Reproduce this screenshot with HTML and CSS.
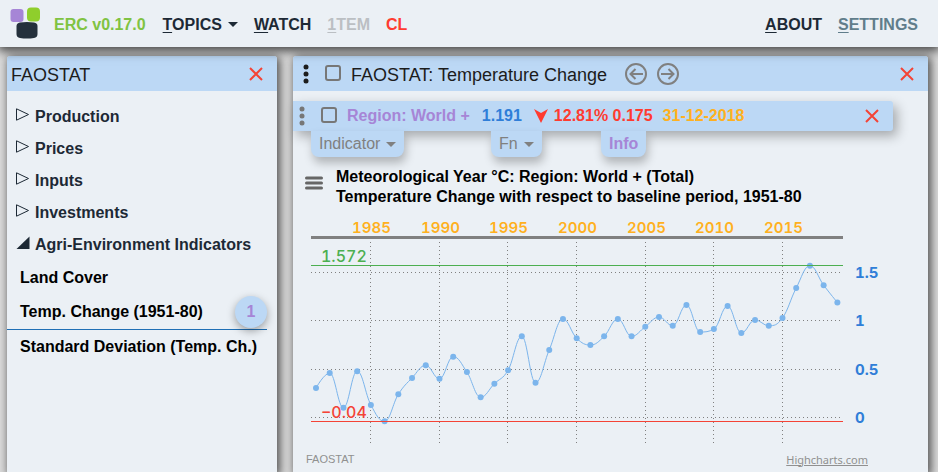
FILE: index.html
```html
<!DOCTYPE html>
<html lang="en">
<head>
    <meta charset="UTF-8">
    <meta name="viewport" content="width=device-width, initial-scale=1.0">
    <title>ERC v0.17.0</title>
    <link rel="stylesheet" href="styles.css">
</head>
<body>
    <header class="topbar">
        <svg class="logo" width="32" height="34" viewBox="0 0 32 34" aria-hidden="true">
            <rect x="0.5" y="2" width="13" height="13" rx="3" fill="#a685d6"/>
            <rect x="17" y="0.5" width="13" height="14" rx="4" fill="#8fce2c"/>
            <path d="M10 15.500Q17 14.500 24 15.500Q27.500 16 27.500 19V27Q27.500 30.500 24 31Q17 32 10 31Q6.500 30.500 6.500 27V19Q6.500 16 10 15.500Z" fill="#24303c"/>
        </svg>
        <span class="version">ERC v0.17.0</span>
        <nav class="menu">
            <button type="button" class="menu-item"><span><u>T</u>OPICS</span><i class="caret"></i></button>
            <a class="menu-item" href="#"><span><u>W</u>ATCH</span></a>
            <a class="menu-item off" href="#"><span><u>1</u>TEM</span></a>
            <a class="menu-item clear" href="#">CL</a>
        </nav>
        <nav class="menu right">
            <a class="menu-item" href="#"><span><u>A</u>BOUT</span></a>
            <a class="menu-item settings" href="#"><span><u>S</u>ETTINGS</span></a>
        </nav>
    </header>

    <main class="content">
        <aside class="panel tree">
            <div class="panel-head">
                <h2>FAOSTAT</h2>
                <button type="button" class="close" aria-label="Close">
                    <svg width="14" height="14" viewBox="0 0 14 14"><path d="M1 1L13 13M13 1L1 13"/></svg>
                </button>
            </div>
            <ul class="groups">
                <li><svg width="14" height="14" viewBox="0 0 14 14"><path class="closed" d="M0.500 0.800L12.500 6.500L0.500 12.200Z"/></svg>Production</li>
                <li><svg width="14" height="14" viewBox="0 0 14 14"><path class="closed" d="M0.500 0.800L12.500 6.500L0.500 12.200Z"/></svg>Prices</li>
                <li><svg width="14" height="14" viewBox="0 0 14 14"><path class="closed" d="M0.500 0.800L12.500 6.500L0.500 12.200Z"/></svg>Inputs</li>
                <li><svg width="14" height="14" viewBox="0 0 14 14"><path class="closed" d="M0.500 0.800L12.500 6.500L0.500 12.200Z"/></svg>Investments</li>
                <li><svg width="14" height="14" viewBox="0 0 14 14"><path class="open" d="M0.500 13H13.500V0.500Z"/></svg>Agri-Environment Indicators</li>
            </ul>
            <ul class="leaves">
                <li>Land Cover</li>
                <li class="selected">Temp. Change (1951-80)<span class="badge">1</span></li>
                <li>Standard Deviation (Temp. Ch.)</li>
            </ul>
        </aside>

        <section class="panel topic">
            <div class="panel-head">
                <svg class="dots" width="6" height="20" viewBox="0 0 6 20"><circle cx="3" cy="3" r="2.500"/><circle cx="3" cy="10" r="2.500"/><circle cx="3" cy="17" r="2.500"/></svg>
                <input type="checkbox" class="check" aria-label="Select topic">
                <h2>FAOSTAT: Temperature Change</h2>
                <button type="button" class="round" aria-label="Back">
                    <svg width="22" height="22" viewBox="0 0 22 22"><circle cx="11" cy="11" r="10"/><path d="M18 11H6M10.500 6L5.500 11L10.500 16"/></svg>
                </button>
                <button type="button" class="round" aria-label="Forward">
                    <svg width="22" height="22" viewBox="0 0 22 22"><circle cx="11" cy="11" r="10"/><path d="M4 11H16M11.500 6L16.500 11L11.500 16"/></svg>
                </button>
                <button type="button" class="close" aria-label="Close">
                    <svg width="14" height="14" viewBox="0 0 14 14"><path d="M1 1L13 13M13 1L1 13"/></svg>
                </button>
            </div>

            <div class="series">
                <svg class="dots" width="6" height="20" viewBox="0 0 6 20"><circle cx="3" cy="3" r="2.500"/><circle cx="3" cy="10" r="2.500"/><circle cx="3" cy="17" r="2.500"/></svg>
                <input type="checkbox" class="check" aria-label="Select series">
                <span class="region">Region: World +</span>
                <span class="value">1.191</span>
                <svg class="down" width="14" height="14" viewBox="0 0 14 14"><path d="M0 0L7 4L14 0L7 14Z"/></svg>
                <span class="change">12.81% 0.175</span>
                <span class="date">31-12-2018</span>
                <button type="button" class="close" aria-label="Remove series">
                    <svg width="14" height="14" viewBox="0 0 14 14"><path d="M1 1L13 13M13 1L1 13"/></svg>
                </button>
            </div>
            <div class="tabs">
                <button type="button" class="tab">Indicator<i class="caret"></i></button>
                <button type="button" class="tab">Fn<i class="caret"></i></button>
                <button type="button" class="tab info">Info</button>
            </div>

            <div class="chart-head">
                <button type="button" class="burger" aria-label="Chart menu">
                    <svg width="18" height="14" viewBox="0 0 18 14"><path d="M1.500 2H16.500M1.500 7H16.500M1.500 12H16.500"/></svg>
                </button>
                <h3>Meteorological Year °C: Region: World + (Total)<br>Temperature Change with respect to baseline period, 1951-80</h3>
            </div>
            <svg id="chart" class="chart" viewBox="0 1 635 238" role="img" aria-label="Temperature change by year"></svg>
            <div class="credits">
                <span>FAOSTAT</span>
                <a href="#">Highcharts.com</a>
            </div>
        </section>
    </main>

    <script src="chart.js"></script>
</body>
</html>
```
FILE: styles.css
```css
* {
    box-sizing: border-box;
}

body {
    margin: 0;
    height: 100vh;
    display: flex;
    flex-direction: column;
    overflow: hidden;
    background-color: #dcdcdc;
    color: #1d2935;
    font-family: "Liberation Sans", Arial, sans-serif;
    font-size: 16px;
}

h2, h3, ul {
    margin: 0;
    padding: 0;
}

ul {
    list-style: none;
}

button {
    border: none;
    padding: 0;
    background: none;
    font: inherit;
    color: inherit;
    cursor: pointer;
}

svg {
    display: block;
    flex: none;
}

a {
    color: inherit;
}

/* top bar */
.topbar {
    position: relative;
    z-index: 2;
    flex: none;
    display: flex;
    align-items: center;
    height: 47px;
    padding: 2px 20px 0 10px;
    background-color: #ebf0f5;
    box-shadow: 0 2px 10px 2px rgba(0, 0, 0, 0.7);
    font-weight: bold;
    white-space: nowrap;
}

.logo {
    margin-right: 12px;
    margin-bottom: 2px;
}

.version {
    color: #80c342;
    margin-right: 17px;
}

.menu {
    display: flex;
    gap: 16px;
}

.menu.right {
    margin-left: auto;
}

.menu-item {
    display: flex;
    align-items: center;
    gap: 6px;
    text-decoration: none;
}

.menu-item u {
    text-underline-offset: 2px;
    text-decoration-thickness: 1px;
}

.off {
    color: #bbbfc3;
}

.clear {
    color: #ff3b30;
}

.settings {
    color: #607d8b;
}

.caret {
    border: 5px solid transparent;
    border-top-color: currentColor;
    border-bottom: 0;
}

/* panels */
.content {
    flex: 1;
    display: flex;
    gap: 16px;
    padding: 9px 10px 0 7px;
}

.panel {
    background-color: #ebf0f5;
    border-radius: 3px 3px 0 0;
    box-shadow: 2px 2px 10px 1px rgba(0, 0, 0, 0.65);
}

.tree {
    flex: 0 0 270px;
}

.topic {
    flex: 1;
    min-width: 0;
}

.panel-head {
    display: flex;
    align-items: center;
    height: 35px;
    padding: 0 14px 0 4px;
    background-color: #bcd8f5;
    border-radius: 3px 3px 0 0;
    color: #1c1c1c;
    white-space: nowrap;
}

.panel-head h2 {
    font-size: 18px;
    font-weight: normal;
    line-height: 20px;
    padding-top: 3px;
}

.topic .panel-head {
    padding-left: 10px;
}

.topic .panel-head h2 {
    margin-right: 18px;
}

.close {
    margin-left: auto;
}

.close path {
    stroke: #f44336;
    stroke-width: 2;
}

.round {
    margin-right: 10px;
}

.round circle, .round path {
    fill: none;
    stroke: #808080;
    stroke-width: 2;
}

.dots {
    fill: currentColor;
    margin-right: 16px;
}

.check {
    appearance: none;
    flex: none;
    width: 16px;
    height: 16px;
    margin: 0 10px 2px 0;
    border: 2px solid #777;
    border-radius: 3px;
}

/* tree */
.groups {
    padding: 10px 0 0 9px;
    font-weight: bold;
}

.groups li {
    display: flex;
    align-items: center;
    gap: 5px;
    height: 32px;
}

.groups svg {
    margin-bottom: 4px;
}

.closed {
    fill: none;
    stroke: #1d2935;
}

.open {
    fill: #1d2935;
}

.leaves {
    margin-right: 10px;
    color: #000;
    font-weight: bold;
}

.leaves li {
    display: flex;
    align-items: center;
    justify-content: space-between;
    height: 33px;
    padding-left: 13px;
}

.leaves .selected {
    height: 36px;
    border-bottom: 1px solid #1f6fb5;
}

.badge {
    width: 32px;
    height: 32px;
    border-radius: 50%;
    background-color: #bcd8f5;
    box-shadow: 0 3px 8px rgba(0, 0, 0, 0.35);
    color: #a685d6;
    line-height: 32px;
    text-align: center;
}

/* series row */
.series {
    position: relative;
    display: flex;
    align-items: center;
    height: 30px;
    margin: 10px 35px 0 0;
    padding: 0 14px 0 6px;
    background-color: #bcd8f5;
    border-radius: 0 3px 3px 0;
    box-shadow: 4px 5px 12px rgba(0, 0, 0, 0.3);
    font-weight: bold;
    white-space: nowrap;
}

.series .dots {
    color: #777;
}

.region {
    color: #a685d6;
    margin-right: 12px;
}

.value {
    color: #2f7ed8;
    margin-right: 12px;
}

.down {
    fill: #ff3b30;
    margin-right: 6px;
}

.change {
    color: #ff3b30;
    margin-right: 10px;
}

.date {
    color: #ffb020;
}

.tabs {
    position: relative;
    display: grid;
    grid-template-columns: 180px 110px auto;
    justify-content: start;
    justify-items: start;
    padding-left: 18px;
}

.tab {
    display: flex;
    align-items: center;
    gap: 6px;
    height: 26px;
    padding: 0 8px;
    background-color: #bcd8f5;
    border-radius: 0 0 8px 8px;
    box-shadow: 2px 6px 10px rgba(0, 0, 0, 0.25);
    color: #808080;
}

.info {
    color: #a685d6;
    font-weight: bold;
}

/* chart */
.chart-head {
    display: flex;
    align-items: flex-start;
    gap: 13px;
    padding: 10px 0 0 12px;
    color: #000;
}

.chart-head h3 {
    font-size: 16px;
    line-height: 20px;
}

.burger {
    padding-top: 9px;
}

.burger path {
    stroke: #666;
    stroke-width: 3;
    stroke-linecap: round;
}

.chart {
    width: 100%;
    height: auto;
    font-family: Inter, "Open Sans", sans-serif;
    font-size: 15px;
    font-variant-numeric: tabular-nums;
}

.grid {
    stroke: #808080;
    stroke-dasharray: 1 3;
}

.axis {
    stroke: #808080;
    stroke-width: 3;
}

.year {
    fill: #ffb020;
    font-weight: 600;
    text-anchor: middle;
}

.tick {
    fill: #2f7ed8;
    font-weight: bold;
}

.line {
    fill: none;
    stroke: #7cb5ec;
}

.point {
    fill: #7cb5ec;
}

.max, .min {
    font-size: 16px;
    font-weight: 500;
}

.max {
    fill: #4caf50;
}

.min {
    fill: #f44336;
}

.max-line {
    stroke: #4caf50;
}

.min-line {
    stroke: #f44336;
}

.credits {
    display: flex;
    justify-content: space-between;
    align-items: center;
    height: 28px;
    padding: 0 60px 0 13px;
    color: #909090;
    font-size: 11px;
}

.credits a {
    font-family: "Noto Sans", sans-serif;
}
```
FILE: chart.js
```javascript
const values = [
    0.305, 0.46, 0.10, 0.48, 0.13, -0.04, 0.24, 0.41, 0.54, 0.40,
    0.63, 0.47, 0.21, 0.35, 0.49, 0.84, 0.36, 0.70, 1.02, 0.82,
    0.75, 0.84, 1.02, 0.84, 0.94, 1.04, 0.95, 1.165, 0.885, 0.915,
    1.155, 0.875, 1.01, 0.95, 1.03, 1.34, 1.572, 1.37, 1.191
];
const firstYear = 1981;
const left = 18;
const right = 550;
const chart = document.getElementById('chart');

function xOf(year) {
    return 23 + (year - firstYear) * 13.72;
}

function yOf(value) {
    return 211.5 - value * 96.6;
}

function add(name, attrs, text) {
    const el = document.createElementNS('http://www.w3.org/2000/svg', name);
    for (const key in attrs) {
        el.setAttribute(key, attrs[key]);
    }
    if (text) {
        el.textContent = text;
    }
    chart.appendChild(el);
}

function hLine(y, cls, end) {
    add('line', { x1: left, x2: end, y1: y, y2: y, class: cls });
}

// keep the control points inside the two neighbours so peaks stay flat
function spline(points) {
    let d = `M ${points[0].x} ${points[0].y}`;
    let prevRight = points[0];
    for (let i = 1; i < points.length; i++) {
        const last = points[i - 1];
        const p = points[i];
        const next = points[i + 1];
        let l = p;
        let r = p;
        if (next) {
            l = { x: (1.5 * p.x + last.x) / 2.5, y: (1.5 * p.y + last.y) / 2.5 };
            r = { x: (1.5 * p.x + next.x) / 2.5, y: (1.5 * p.y + next.y) / 2.5 };
            const fix = (r.y - l.y) * (r.x - p.x) / (r.x - l.x) + p.y - r.y;
            l.y += fix;
            r.y += fix;
            const clamped = Math.min(Math.max(l.y, Math.min(last.y, p.y)), Math.max(last.y, p.y));
            if (clamped !== l.y) {
                l.y = clamped;
                r.y = 2 * p.y - l.y;
            }
            const clampedR = Math.min(Math.max(r.y, Math.min(next.y, p.y)), Math.max(next.y, p.y));
            if (clampedR !== r.y) {
                r.y = clampedR;
                l.y = 2 * p.y - r.y;
            }
        }
        d += ` C ${prevRight.x} ${prevRight.y} ${l.x} ${l.y} ${p.x} ${p.y}`;
        prevRight = r;
    }
    return d;
}

for (let year = 1985; year <= 2015; year += 5) {
    const x = Math.floor(xOf(year) - 0.2) + 0.5;
    add('line', { x1: x, x2: x, y1: 36, y2: 241, class: 'grid' });
    add('text', { x: x + 1, y: 27, class: 'year' }, String(year));
}
for (const tick of [0, 0.5, 1, 1.5]) {
    const y = Math.floor(yOf(tick)) + 0.5;
    hLine(y, 'grid', right - 2);
    add('text', { x: 562, y: y + 5, class: 'tick' }, String(tick));
}
hLine(31.5, 'axis', right);

const points = values.map((v, i) => ({ x: xOf(firstYear + i), y: yOf(v) }));
add('path', { d: spline(points), class: 'line' });
points.forEach(p => add('circle', { cx: p.x, cy: p.y, r: 3, class: 'point' }));

hLine(59.5, 'max-line', right);
add('text', { x: 28, y: 56, class: 'max' }, '1.572');
hLine(215.5, 'min-line', right);
add('text', { x: 28, y: 212, class: 'min' }, '−0.04');
```
